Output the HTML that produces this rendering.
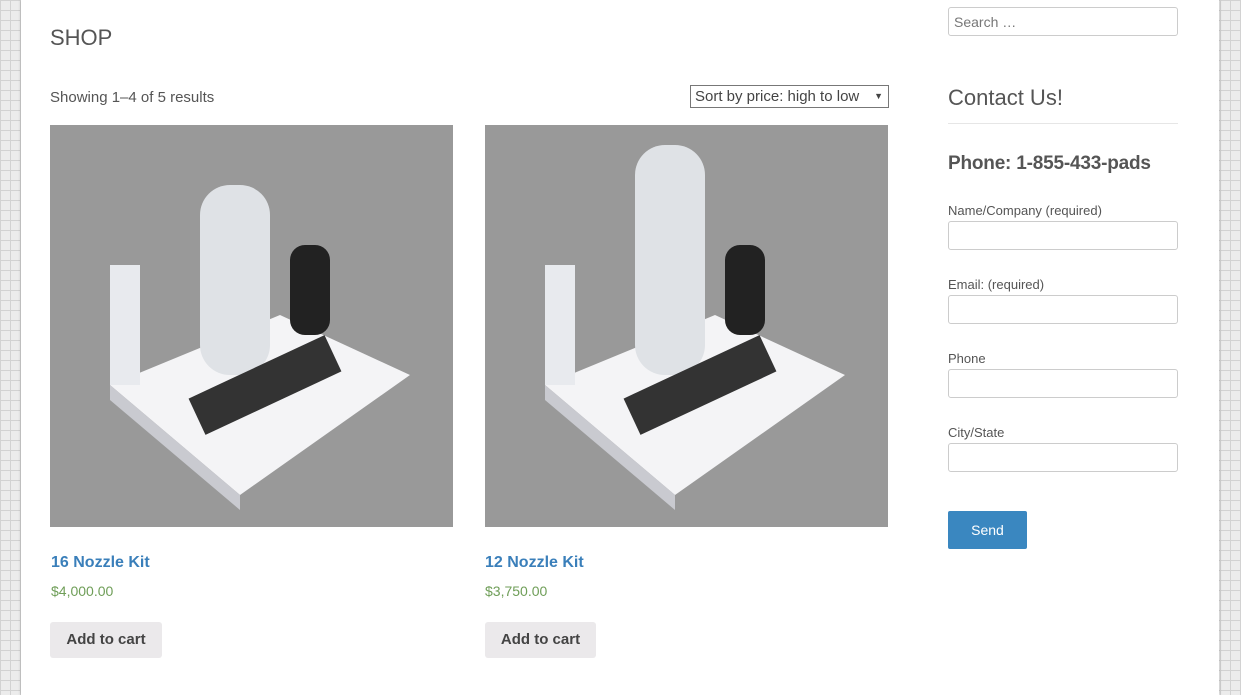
<!DOCTYPE html>
<html><head><style>
body{margin:0;width:1241px;height:695px;overflow:hidden;font-family:"Liberation Sans",sans-serif;
background-color:#ececec;background-image:linear-gradient(#d2d2d2 1px,transparent 1px),linear-gradient(90deg,#d2d2d2 1px,transparent 1px);background-size:10px 10px;position:relative}
.page{position:absolute;left:21px;top:0;width:1198px;height:695px;background:#fff;box-shadow:0 0 3px rgba(0,0,0,.25)}
.a{position:absolute}
h1{position:absolute;left:29px;top:25px;margin:0;font-weight:normal;font-size:22px;color:#555}
.img{position:absolute;top:125px;width:403px;height:402px;background:#999;overflow:hidden}
.t{font-size:16px;font-weight:bold;color:#3a7fba}
.p{font-size:14px;color:#6f9e58}
.btn{position:absolute;top:622px;height:36px;background:#ebe9eb;border-radius:3px;font-weight:bold;font-size:15px;color:#444;line-height:36px;text-align:center;width:112px}
.in{position:absolute;left:927px;width:228px;height:27px;border:1px solid #ccc;border-radius:3px}
.lb{position:absolute;left:927px;font-size:13px;color:#555}
</style></head><body><div class="page">
<h1>SHOP</h1>
<div class="a" style="left:29px;top:89px;font-size:15px;color:#555">Showing 1–4 of 5 results</div>
<div class="a" style="left:669px;top:85px;font-size:15px;color:#444;line-height:21px;padding-left:4px;box-sizing:border-box;width:199px;height:23px;border:1px solid #777">Sort by price: high to low <span style="font-size:9px;position:absolute;right:5px">▼</span></div>
<div class="img" style="left:29px"><svg width="402" height="402"><polygon points="60,260 230,190 360,250 190,370" fill="#f4f4f6"/><polygon points="60,260 190,370 190,385 60,275" fill="#c9cad0"/><rect x="150" y="60" width="70" height="190" rx="30" fill="#dfe2e6"/><rect x="60" y="140" width="30" height="120" fill="#e8eaee"/><rect x="240" y="120" width="40" height="90" rx="15" fill="#222"/><rect x="140" y="240" width="150" height="40" fill="#333" transform="rotate(-25 215 260)"/></svg></div>
<div class="img" style="left:464px"><svg width="402" height="402"><polygon points="60,260 230,190 360,250 190,370" fill="#f4f4f6"/><polygon points="60,260 190,370 190,385 60,275" fill="#c9cad0"/><rect x="150" y="20" width="70" height="230" rx="30" fill="#dfe2e6"/><rect x="60" y="140" width="30" height="120" fill="#e8eaee"/><rect x="240" y="120" width="40" height="90" rx="15" fill="#222"/><rect x="140" y="240" width="150" height="40" fill="#333" transform="rotate(-25 215 260)"/></svg></div>
<div class="a t" style="left:30px;top:554px">16 Nozzle Kit</div>
<div class="a t" style="left:464px;top:554px">12 Nozzle Kit</div>
<div class="a p" style="left:30px;top:583px">$4,000.00</div>
<div class="a p" style="left:464px;top:583px">$3,750.00</div>
<div class="btn" style="left:29px">Add to cart</div>
<div class="btn" style="left:464px;width:111px">Add to cart</div>
<div class="in" style="top:7px;height:27px"><span style="position:absolute;left:5px;top:6px;font-size:14px;color:#777">Search …</span></div>
<div class="a" style="left:927px;top:85px;font-size:22px;color:#555">Contact Us!</div>
<div class="a" style="left:927px;top:123px;width:230px;height:1px;background:#e6e6e6"></div>
<div class="a" style="left:927px;top:153px;font-size:19px;font-weight:bold;color:#555;letter-spacing:-0.2px">Phone: 1-855-433-pads</div>
<div class="lb" style="top:203px">Name/Company (required)</div><div class="in" style="top:221px"></div>
<div class="lb" style="top:277px">Email: (required)</div><div class="in" style="top:295px"></div>
<div class="lb" style="top:351px">Phone</div><div class="in" style="top:369px"></div>
<div class="lb" style="top:425px">City/State</div><div class="in" style="top:443px"></div>
<div class="a" style="left:927px;top:511px;width:79px;height:38px;background:#3a87c0;border-radius:2px;color:#fff;font-size:14px;line-height:38px;text-align:center">Send</div>
</div></body></html>
